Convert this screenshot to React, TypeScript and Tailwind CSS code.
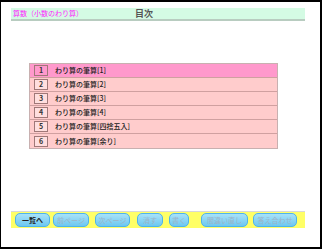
import React from 'react'

const items = [
    'わり算の筆算[1]',
    'わり算の筆算[2]',
    'わり算の筆算[3]',
    'わり算の筆算[4]',
    'わり算の筆算[四捨五入]',
    'わり算の筆算[余り]',
]

const buttons = [
    { label: '一覧へ', cls: 'w-[35px]', active: true },
    { label: '前ページ', cls: 'w-[36px] ml-[3px]', active: false },
    { label: '次ページ', cls: 'w-[35px] ml-[6px]', active: false },
    { label: '消す', cls: 'w-[26px] ml-[7px]', active: false },
    { label: '書く', cls: 'w-[20px] ml-[6px]', active: false },
    { label: '間違い直し', cls: 'w-[47px] ml-[12px]', active: false },
    { label: '答え合わせ', cls: 'w-[44px] ml-[5px]', active: false },
]

const App: React.FC = () => {
    return (
        <div
            className="w-[322px] h-[249px] bg-white border-t-2 border-l border-r-2 border-b-2 border-black flex flex-col"
            style={{ fontFamily: '"Noto Sans CJK JP", "Noto Sans", sans-serif' }}
        >
            {/* header */}
            <div className="ml-[10px] mt-[6px] w-[294px] h-[13px] bg-[#d4fbe4] border-b-2 border-[#b8ccc0] flex items-center">
                <span className="pl-[2px] text-[7px] leading-none text-[#ff22ff] w-[124px]">算数（小数のわり算）</span>
                <span className="text-[9px] leading-none font-bold text-[#555]">目次</span>
            </div>

            {/* list */}
            <div className="ml-[28px] mt-[42px] w-[249px] border border-[#c8b0b0] flex flex-col">
                {items.map((item, idx) => (
                    <div
                        key={idx}
                        className={`h-[14px] flex items-center border-b border-[#d0a0a0] last:border-b-0 ${idx === 0 ? 'bg-[#ff99cc]' : 'bg-[#ffcccc]'}`}
                    >
                        <div
                            className={`ml-[4px] w-[14px] h-[11px] flex items-center justify-center border border-[#a07878] text-[7px] font-bold leading-none text-[#333] ${idx === 0 ? 'bg-[#ff99cc]' : 'bg-[#ffdede]'}`}
                        >
                            {idx + 1}
                        </div>
                        <span className="ml-[7px] text-[7px] font-medium leading-none text-[#222]">{item}</span>
                    </div>
                ))}
            </div>

            {/* footer */}
            <div className="ml-[10px] mt-auto mb-[19px] w-[294px] h-[17px] bg-[#ffff66] border-t border-[#d8d8d8] flex items-center pl-[4px]">
                {buttons.map((b) => (
                    <div
                        key={b.label}
                        className={`${b.cls} h-[14px] rounded-[5px] border border-[#4fb3ea] bg-gradient-to-b from-[#a8e2f8] to-[#6cc8f0] flex items-center justify-center text-[7px] leading-none whitespace-nowrap ${b.active ? 'text-[#222] font-bold' : 'text-[#9ab4c8]'}`}
                    >
                        {b.label}
                    </div>
                ))}
            </div>
        </div>
    )
}

export default App
